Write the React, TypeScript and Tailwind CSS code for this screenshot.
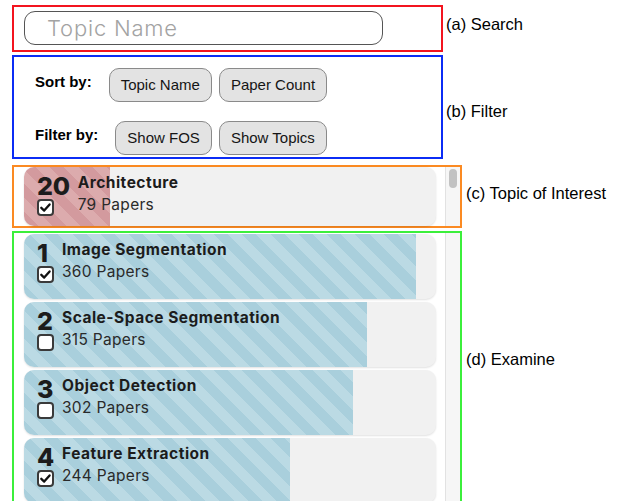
import type { ReactNode } from "react";

type Topic = {
  rank: number;
  name: string;
  papers: number;
  checked: boolean;
};

const pinned: Topic = { rank: 20, name: "Architecture", papers: 79, checked: true };

const topics: Topic[] = [
  { rank: 1, name: "Image Segmentation", papers: 360, checked: true },
  { rank: 2, name: "Scale-Space Segmentation", papers: 315, checked: false },
  { rank: 3, name: "Object Detection", papers: 302, checked: false },
  { rank: 4, name: "Feature Extraction", papers: 244, checked: true },
];

// 360 papers fills 392px of the card
const barWidth = (papers: number) => Math.round((papers * 392) / 360);

function CheckBox({ checked }: { checked: boolean }) {
  return (
    <svg width="17" height="17" viewBox="0 0 17 17" className="block">
      <rect x="1" y="1" width="15" height="15" rx="3" fill="#fff" stroke="#3a3a3a" strokeWidth="2" />
      {checked && (
        <path d="M4.3 8.8 L7.2 11.6 L12.6 5.4" fill="none" stroke="#111" strokeWidth="2.3" strokeLinecap="round" strokeLinejoin="round" />
      )}
    </svg>
  );
}

function TopicCard({ topic, tone, height }: { topic: Topic; tone: "red" | "blue"; height: string }) {
  return (
    <div
      className={`relative w-[412px] overflow-hidden rounded-[10px] bg-[#f1f1f1] shadow-[0_1px_2px_rgba(0,0,0,0.12)] ${height}`}
    >
      <div
        className={`absolute inset-y-0 left-0 ${
          tone === "red"
            ? "bg-[repeating-linear-gradient(45deg,#d39a9e_0px,#d39a9e_10px,#dcabad_10px,#dcabad_20px)]"
            : "bg-[repeating-linear-gradient(45deg,#a9cfdc_0px,#a9cfdc_10px,#bbdae4_10px,#bbdae4_20px)]"
        }`}
        style={{ width: barWidth(topic.papers) }}
      />
      <div className="relative flex items-start pl-[13px] pt-[5px] font-['Inter',sans-serif] text-[#1c1c1c]">
        <div className="flex min-w-[17px] flex-col items-start">
          <div className="mt-[2px] text-[25px] font-extrabold leading-[24px] tracking-[-0.3px]">{topic.rank}</div>
          <div className="mt-[1px]">
            <CheckBox checked={topic.checked} />
          </div>
        </div>
        <div className="ml-[8px] flex flex-col">
          <div className="text-[15.5px] font-bold leading-[22px] tracking-[0.5px]">{topic.name}</div>
          <div className="text-[15.5px] leading-[22px] tracking-[0.3px] text-[#2a2a2a]">{topic.papers} Papers</div>
        </div>
      </div>
    </div>
  );
}

function PillButton({ children }: { children: ReactNode }) {
  return (
    <button className="h-[34px] rounded-[10px] border border-[#8a8a8a] bg-[#e3e3e3] px-[11px] text-[15px] text-[#151515]">
      {children}
    </button>
  );
}

function Caption({ children, className }: { children: ReactNode; className: string }) {
  return <div className={`text-[16.5px] leading-[18px] text-black ${className}`}>{children}</div>;
}

export default function App() {
  return (
    <div className="h-[501px] w-[618px] overflow-hidden bg-white font-['Liberation_Sans',Arial,sans-serif]">
      <div className="flex flex-col pl-[12px] pt-[5px]">
        {/* search */}
        <div className="flex items-start">
          <div className="h-[47px] w-[431px] border-2 border-[#f3141f] pl-[10px] pt-[4px]">
            <input
              className="h-[34px] w-[359px] rounded-[11px] border-[1.5px] border-[#555] bg-white pl-[22px] font-['Inter',sans-serif] text-[22px] font-light tracking-[0.8px] text-[#333] outline-none placeholder:text-[#a3a3a3]"
              placeholder="Topic Name"
            />
          </div>
          <Caption className="ml-[3px] mt-[10px]">(a) Search</Caption>
        </div>

        {/* sort + filter */}
        <div className="mt-[3px] flex items-start">
          <div className="flex h-[104px] w-[431px] flex-col gap-[19px] border-2 border-[#0b2cf5] pl-[21px] pt-[11px]">
            <div className="flex items-start">
              <span className="mt-[5px] text-[15px] font-bold leading-[17px]">Sort by:</span>
              <div className="ml-[17px] flex gap-[7px]">
                <PillButton>Topic Name</PillButton>
                <PillButton>Paper Count</PillButton>
              </div>
            </div>
            <div className="flex items-start">
              <span className="mt-[5px] text-[15px] font-bold leading-[17px]">Filter by:</span>
              <div className="ml-[17px] flex gap-[7px]">
                <PillButton>Show FOS</PillButton>
                <PillButton>Show Topics</PillButton>
              </div>
            </div>
          </div>
          <Caption className="ml-[3px] mt-[47px]">(b) Filter</Caption>
        </div>

        {/* pinned topic */}
        <div className="mt-[6px] flex items-start">
          <div className="flex h-[63px] w-[450px] border-2 border-[#fb8a22]">
            <div className="pl-[10px]">
              <TopicCard topic={pinned} tone="red" height="h-[59px]" />
            </div>
            <div className="ml-[9px] flex-1 border-l border-[#e2e2e2] bg-[#f6f6f6] pl-[3px] pt-[2px]">
              <div className="h-[19px] w-[8px] rounded-full bg-[#c2c2c2]" />
            </div>
          </div>
          <Caption className="ml-[4px] mt-[19px]">(c) Topic of Interest</Caption>
        </div>

        {/* topic list */}
        <div className="mt-[3px] flex items-start">
          <div className="flex h-[300px] w-[450px] border-2 border-[#3bef3b]">
            <div className="flex flex-col gap-[3px] pl-[10px] pt-[1px]">
              {topics.map((t) => (
                <TopicCard key={t.rank} topic={t} tone="blue" height="h-[65px]" />
              ))}
            </div>
            <div className="ml-[9px] flex-1 border-l border-[#e2e2e2] bg-[#f6f6f6]" />
          </div>
          <Caption className="ml-[4px] mt-[119px]">(d) Examine</Caption>
        </div>
      </div>
    </div>
  );
}
